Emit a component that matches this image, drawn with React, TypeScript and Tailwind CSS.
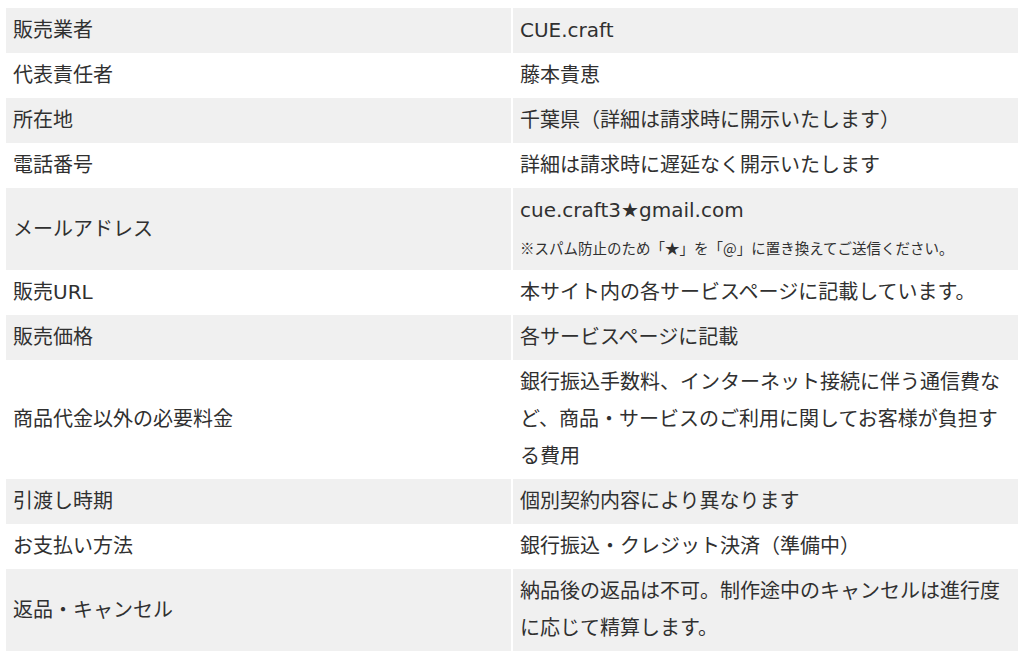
const ROWS: { label: string; value: React.ReactNode }[] = [
  { label: "販売業者", value: "CUE.craft" },
  { label: "代表責任者", value: "藤本貴恵" },
  { label: "所在地", value: "千葉県（詳細は請求時に開示いたします）" },
  { label: "電話番号", value: "詳細は請求時に遅延なく開示いたします" },
  {
    label: "メールアドレス",
    value: (
      <>
        <div className="h-[37px]">cue.craft3★gmail.com</div>
        <div className="h-[37px] font-['Noto_Sans_CJK_JP',sans-serif] text-[14.5px]">
          ※スパム防止のため「★」を「@」に置き換えてご送信ください。
        </div>
      </>
    ),
  },
  { label: "販売URL", value: "本サイト内の各サービスページに記載しています。" },
  { label: "販売価格", value: "各サービスページに記載" },
  {
    label: "商品代金以外の必要料金",
    value: "銀行振込手数料、インターネット接続に伴う通信費など、商品・サービスのご利用に関してお客様が負担する費用",
  },
  { label: "引渡し時期", value: "個別契約内容により異なります" },
  { label: "お支払い方法", value: "銀行振込・クレジット決済（準備中）" },
  { label: "返品・キャンセル", value: "納品後の返品は不可。制作途中のキャンセルは進行度に応じて精算します。" },
];

export default function App() {
  return (
    <div className="min-h-screen bg-white px-[4px] pt-[8px] font-['DejaVu_Sans','Noto_Sans_CJK_JP',sans-serif] text-[#303030]">
      <table className="w-full table-fixed border-separate border-spacing-x-[2px] border-spacing-y-0 text-[20px] leading-[37px]">
        <tbody>
          {ROWS.map((row, i) => (
            <tr key={row.label} className={i % 2 === 0 ? "bg-[#f0f0f0]" : "bg-white"}>
              <td className="px-[7px] py-[4px] align-middle">{row.label}</td>
              <td className="px-[7px] py-[4px] align-middle">{row.value}</td>
            </tr>
          ))}
        </tbody>
      </table>
    </div>
  );
}
